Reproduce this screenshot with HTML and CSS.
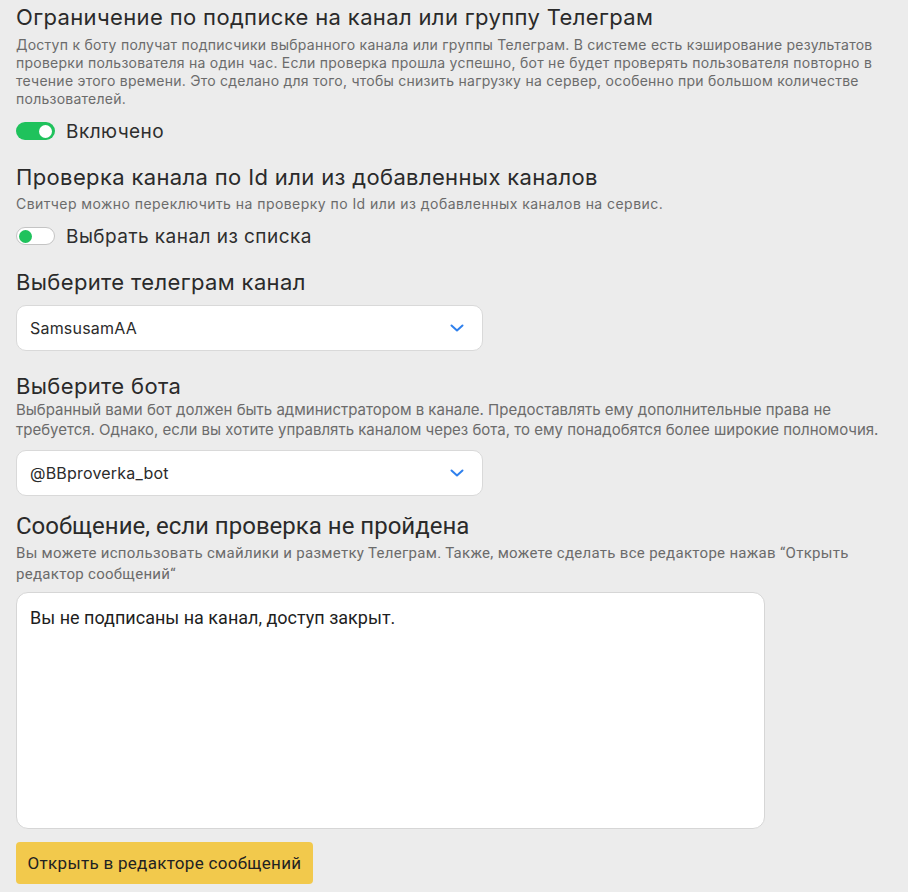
FILE: index.html
```html
<!DOCTYPE html>
<html lang="ru">
<head>
<meta charset="utf-8">
<link rel="stylesheet" href="styles.css">
</head>
<body>
<div class="page">
  <section class="block">
    <h1 class="title title-lg">Ограничение по подписке на канал или группу Телеграм</h1>
    <p class="desc desc-1">Доступ к боту получат подписчики выбранного канала или группы Телеграм. В системе есть кэширование результатов проверки пользователя на один час. Если проверка прошла успешно, бот не будет проверять пользователя повторно в течение этого времени. Это сделано для того, чтобы снизить нагрузку на сервер, особенно при большом количестве пользователей.</p>
    <label class="switch-row">
      <span class="switch on"><span class="knob"></span></span>
      <span class="switch-label">Включено</span>
    </label>
  </section>

  <section class="block">
    <h2 class="title">Проверка канала по Id или из добавленных каналов</h2>
    <p class="desc desc-2">Свитчер можно переключить на проверку по Id или из добавленных каналов на сервис.</p>
    <label class="switch-row">
      <span class="switch off"><span class="knob"></span></span>
      <span class="switch-label">Выбрать канал из списка</span>
    </label>
  </section>

  <section class="block">
    <h2 class="title">Выберите телеграм канал</h2>
    <div class="select">
      <span class="select-value">SamsusamAA</span>
      <svg class="chev" width="14" height="8" viewBox="0 0 14 8"><path d="M1.5 1.5 L7 6.5 L12.5 1.5" fill="none" stroke="#2f80ed" stroke-width="2" stroke-linecap="round" stroke-linejoin="round"/></svg>
    </div>
  </section>

  <section class="block">
    <h2 class="title">Выберите бота</h2>
    <p class="desc desc-4">Выбранный вами бот должен быть администратором в канале. Предоставлять ему дополнительные права не требуется. Однако, если вы хотите управлять каналом через бота, то ему понадобятся более широкие полномочия.</p>
    <div class="select">
      <span class="select-value">@BBproverka_bot</span>
      <svg class="chev" width="14" height="8" viewBox="0 0 14 8"><path d="M1.5 1.5 L7 6.5 L12.5 1.5" fill="none" stroke="#2f80ed" stroke-width="2" stroke-linecap="round" stroke-linejoin="round"/></svg>
    </div>
  </section>

  <section class="block msg">
    <h2 class="title">Сообщение, если проверка не пройдена</h2>
    <p class="desc desc-5">Вы можете использовать смайлики и разметку Телеграм. Также, можете сделать все редакторе нажав “Открыть редактор сообщений“</p>
    <div class="textarea">Вы не подписаны на канал, доступ закрыт.</div>
    <button class="btn">Открыть в редакторе сообщений</button>
  </section>
</div>
</body>
</html>
```

FILE: styles.css
```css
* { box-sizing: border-box; }
html, body { margin: 0; padding: 0; }
body {
  background: #ececec;
  font-family: Inter, "Noto Sans", sans-serif;
  color: #2b2b2b;
  width: 908px;
  height: 892px;
  overflow: hidden;
}
.page {
  padding: 3px 16px 0 16px;
  display: flex;
  flex-direction: column;
}
.block { display: flex; flex-direction: column; }
.block + .block { margin-top: 22px; }
.title {
  margin: 0;
  font-size: 22px;
  line-height: 26px;
  font-weight: 400;
  color: #2a2a2a;
  letter-spacing: 0.36px;
}
.title-lg { line-height: 28px; }
.desc {
  margin: 5px 0 0 0;
  font-size: 14px;
  line-height: 18px;
  color: #6b6b6b;
}
.desc-1 { letter-spacing: 0.25px; }
.desc-2 { letter-spacing: 0.45px; }
.desc-4 { font-size: 15px; letter-spacing: 0; line-height: 20px; margin-top: 1px; }
.switch-row {
  display: flex;
  align-items: center;
  gap: 11px;
  margin-top: 12px;
  height: 22px;
}
.switch {
  width: 39px;
  height: 18px;
  border-radius: 9px;
  display: flex;
  align-items: center;
  padding: 0 3px;
  flex: none;
}
.switch.on { background: #1fc25c; justify-content: flex-end; }
.switch.on .knob { width: 13px; height: 13px; border-radius: 50%; background: #fff; }
.switch.off { background: #fff; border: 1px solid #c4c4c4; justify-content: flex-start; padding: 0 2px; }
.switch.off .knob { width: 13px; height: 13px; border-radius: 50%; background: #1fc25c; }
.switch-label { font-size: 19px; letter-spacing: 0.45px; color: #2e2e2e; }
.select {
  margin-top: 10px;
  width: 467px;
  height: 46px;
  background: #fff;
  border: 1px solid #d9d9d9;
  border-radius: 10px;
  display: flex;
  align-items: center;
  justify-content: space-between;
  padding: 0 18px 0 13px;
  font-size: 16px;
  letter-spacing: 0.2px;
  color: #2b2b2b;
}
.chev { display: block; }
.block.msg { margin-top: 16px; }
.msg .title, .msg .desc, .msg .textarea, .msg .btn { font-family: Roboto, "Noto Sans", sans-serif; }
.msg .title { font-size: 24px; letter-spacing: 0; line-height: 28px; }
.desc-5 { font-size: 15px; letter-spacing: 0.3px; margin-top: 3px; line-height: 21px; }
.textarea {
  margin-top: 7px;
  width: 749px;
  height: 237px;
  background: #fff;
  border: 1px solid #d6d6d6;
  border-radius: 12px;
  padding: 14px 13px;
  font-size: 18px;
  color: #1e1e1e;
  line-height: 22px;
}
.btn {
  margin-top: 13px;
  width: 297px;
  height: 42px;
  background: #f2c94c;
  border: none;
  border-radius: 4px;
  font-size: 17px;
  letter-spacing: 0.3px;
  color: #222;
  padding: 0;
  text-align: center;
  align-self: flex-start;
}
```
